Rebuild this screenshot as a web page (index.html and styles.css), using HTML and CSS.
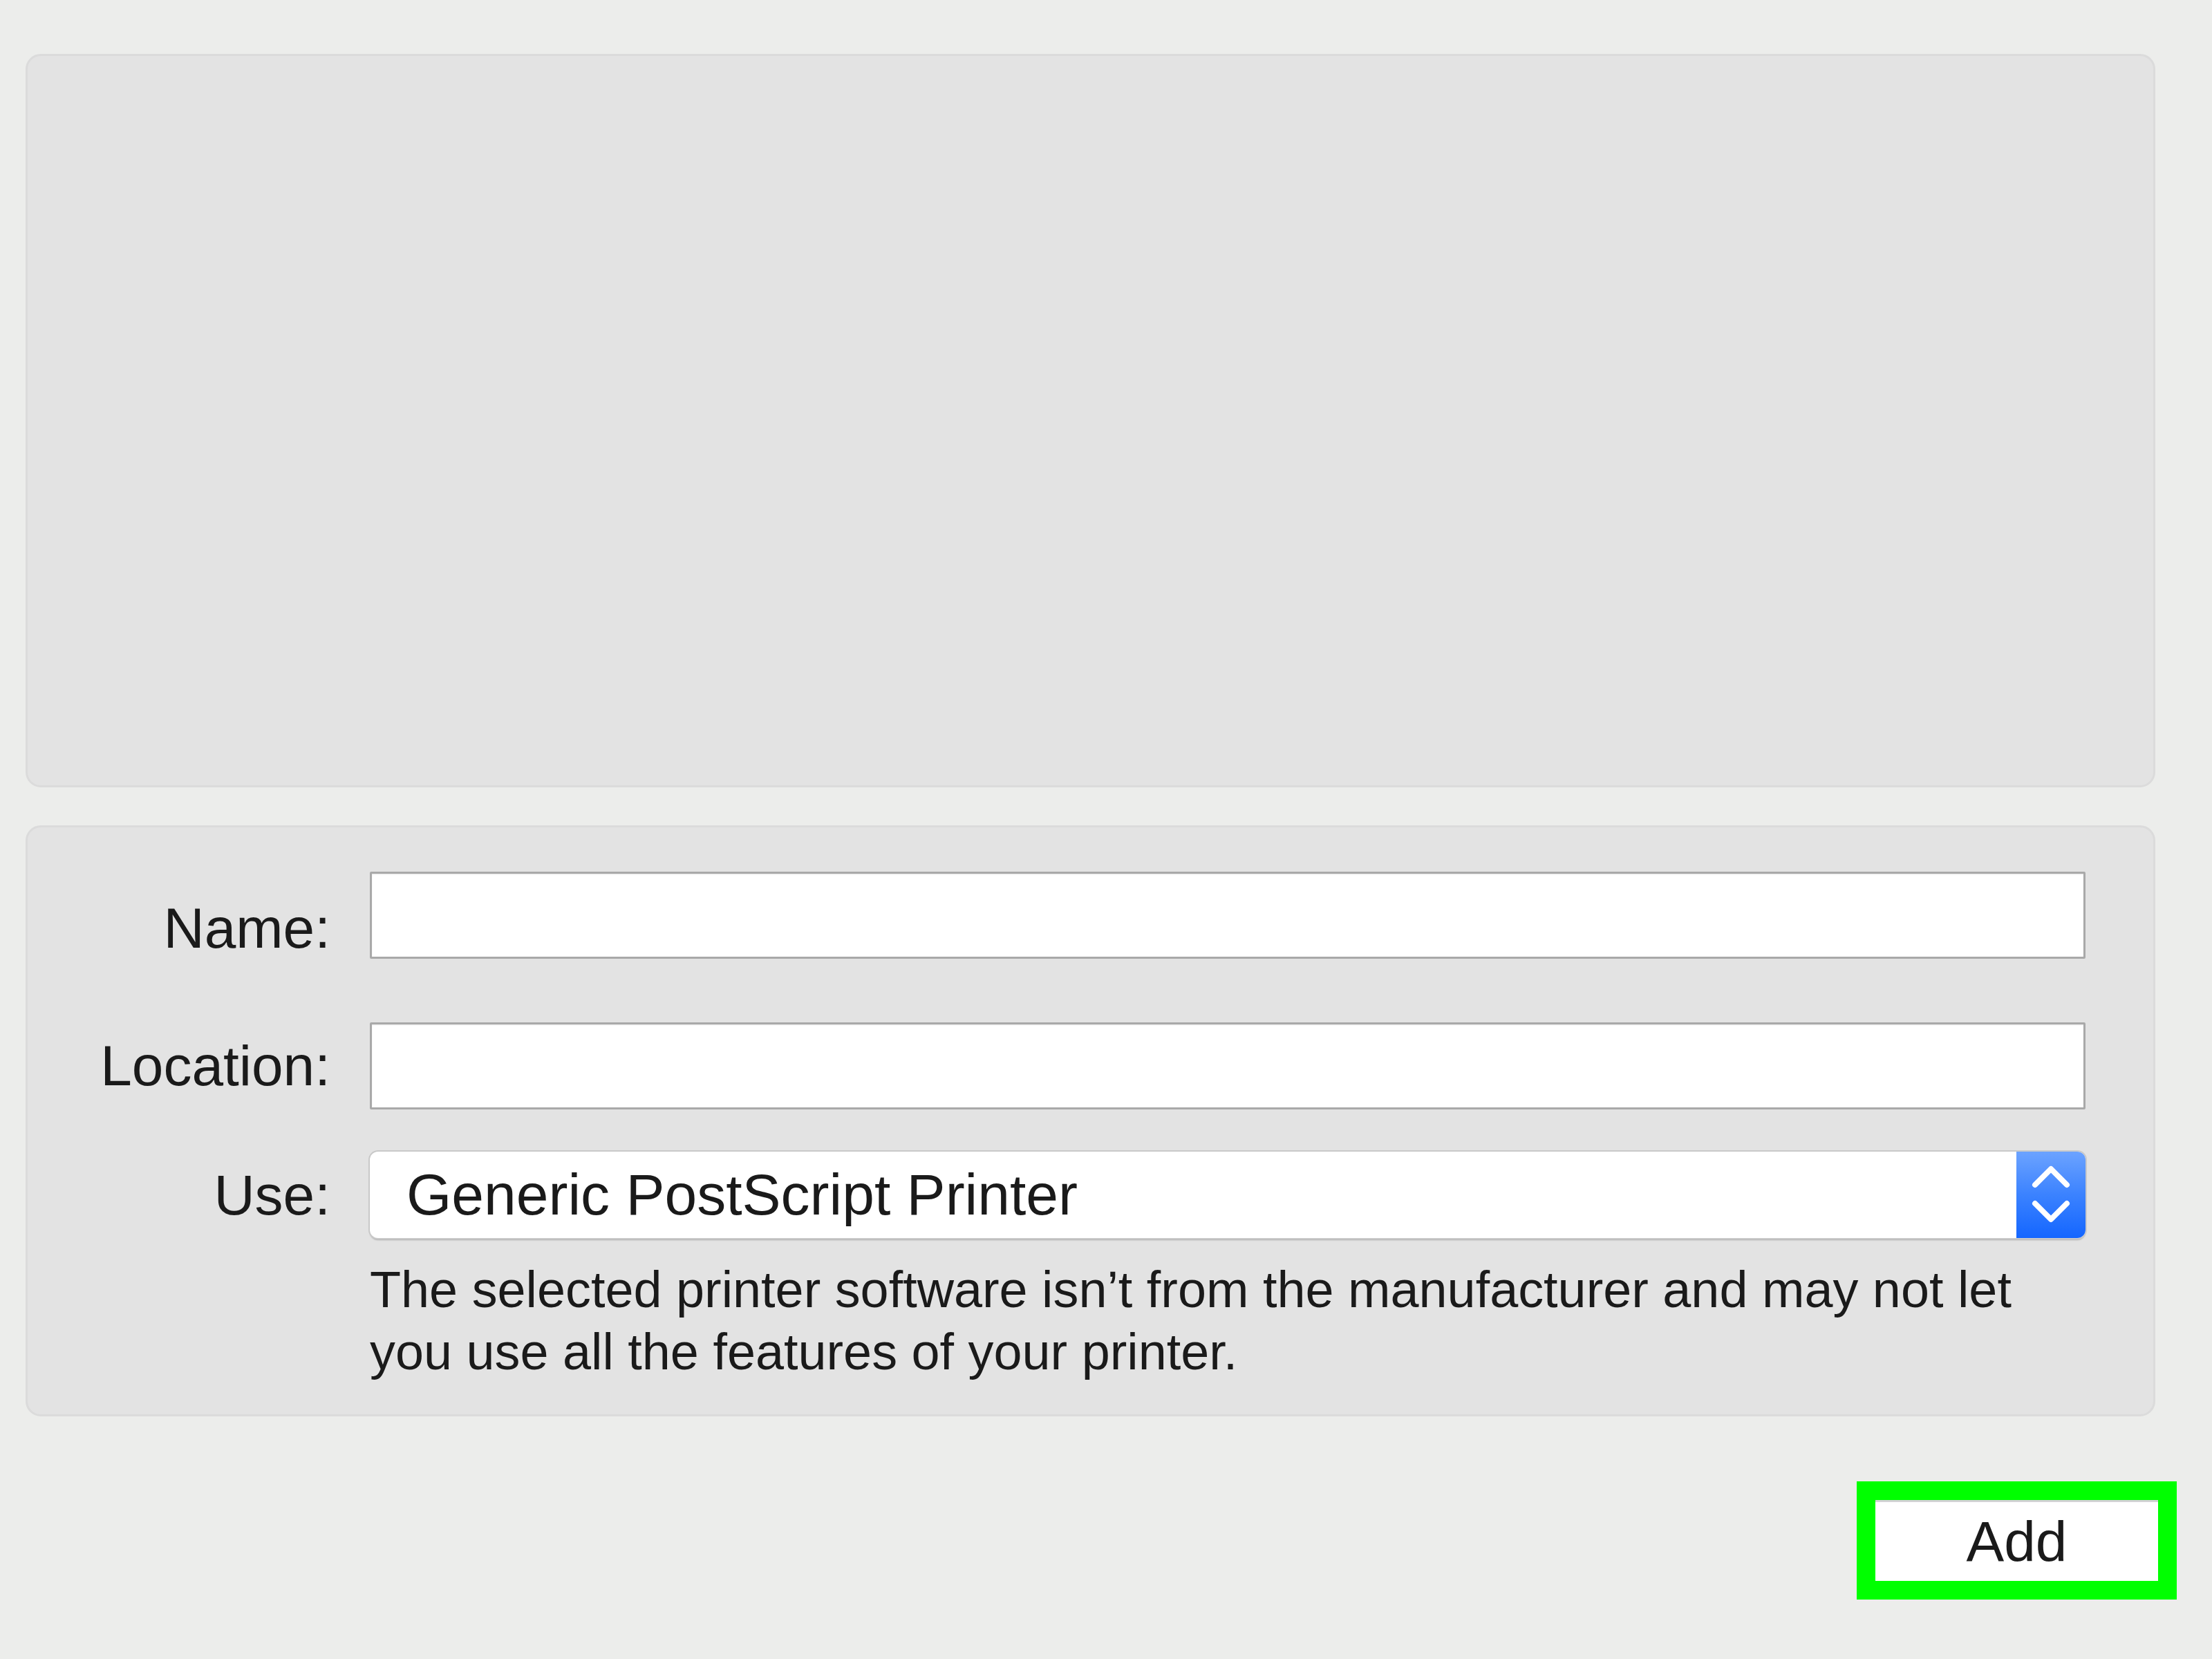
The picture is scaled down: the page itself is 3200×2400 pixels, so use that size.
FILE: index.html
```html
<!DOCTYPE html>
<html lang="en">
<head>
<meta charset="utf-8">
<title>Add Printer</title>
<link rel="stylesheet" href="styles.css">
</head>
<body>
<div class="page">
  <div class="panels">
    <div class="panel panel-list"></div>
    <div class="panel panel-form">
      <div class="form">
        <label class="label label-name" for="name">Name:</label>
        <input class="field" id="name" type="text">
        <label class="label row-location" for="location">Location:</label>
        <input class="field row-location" id="location" type="text">
        <span class="label row-use">Use:</span>
        <div class="select row-use">
          <span class="select-value">Generic PostScript Printer</span>
          <span class="stepper">
            <svg width="100" height="125" viewBox="0 0 100 125" aria-hidden="true">
              <path d="M27 48 L50 25 L73 48" fill="none" stroke="#fff" stroke-width="8" stroke-linecap="round" stroke-linejoin="round"/>
              <path d="M27 75 L50 98 L73 75" fill="none" stroke="#fff" stroke-width="8" stroke-linecap="round" stroke-linejoin="round"/>
            </svg>
          </span>
        </div>
        <p class="note">The selected printer software isn’t from the manufacturer and may not let<br>you use all the features of your printer.</p>
      </div>
    </div>
  </div>
  <div class="actions">
    <div class="highlight">
      <button class="button" type="button">Add</button>
    </div>
  </div>
</div>
</body>
</html>
```

FILE: styles.css
```css
html, body {
  margin: 0;
  padding: 0;
}

body {
  width: 3200px;
  height: 2400px;
  background: #ecedeb;
  font-family: "Liberation Sans", Arial, sans-serif;
  color: #1a1a1a;
  overflow: hidden;
}

.page {
  padding: 78px 0 0 37px;
}

.panels {
  margin-right: 82px;
  display: flex;
  flex-direction: column;
  gap: 55px;
}

.panel {
  background: #e3e3e3;
  border: 3px solid #dbdbdb;
  border-radius: 22px;
  box-sizing: border-box;
}

.panel-list {
  height: 1061px;
}

.panel-form {
  height: 855px;
  padding: 64px 101px 0 0;
}

.form {
  display: grid;
  grid-template-columns: 438px 2482px;
  column-gap: 57px;
  align-items: center;
}

.label {
  font-size: 82px;
  text-align: right;
  line-height: 1;
}

.label-name {
  padding-top: 38px;
}

.field {
  display: block;
  box-sizing: border-box;
  width: 2482px;
  height: 126px;
  margin: 0;
  padding: 0 40px;
  background: #fff;
  border: 3px solid #a9a9a9;
  border-radius: 2px;
  box-shadow: inset 0 1px 2px rgba(0, 0, 0, 0.1);
  font: inherit;
  font-size: 82px;
  outline: none;
  -webkit-appearance: none;
  appearance: none;
}

.row-location {
  margin-top: 92px;
}

.row-use {
  margin-top: 61px;
}

.select {
  height: 125px;
  display: flex;
  align-items: stretch;
  background: #fff;
  border-radius: 12px;
  box-shadow: 0 0 0 2px #c9c9c9, 0 3px 2px 0 rgba(0, 0, 0, 0.25);
}

.select-value {
  flex: 1;
  display: flex;
  align-items: center;
  padding-left: 53px;
  font-size: 84px;
  white-space: nowrap;
}

.stepper {
  width: 100px;
  display: flex;
  align-items: center;
  justify-content: center;
  border-radius: 0 12px 12px 0;
  background: linear-gradient(180deg, #6ca3ff 0%, #3b82ff 50%, #1466ff 100%);
}

.stepper svg {
  display: block;
}

.note {
  grid-column: 2;
  margin: 30px 0 0 0;
  font-size: 73.8px;
  line-height: 90px;
  white-space: nowrap;
}

.actions {
  display: flex;
  justify-content: flex-end;
  padding: 94px 51px 0 0;
}

.highlight {
  border: 27px solid #00ff00;
  width: 409px;
  height: 117px;
}

.button {
  display: block;
  width: 100%;
  height: 100%;
  margin: 0;
  padding: 0;
  background: #fff;
  border: none;
  border-top: 3px solid #d2d2d4;
  font-family: "Liberation Sans", Arial, sans-serif;
  font-size: 82px;
  color: #1a1a1a;
  text-align: center;
  cursor: default;
}
```
